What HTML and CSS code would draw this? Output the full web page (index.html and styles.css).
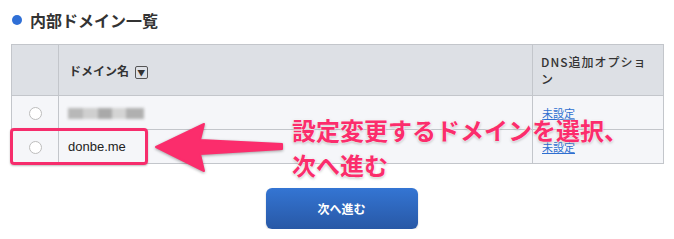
FILE: index.html
```html
<!DOCTYPE html>
<html lang="ja">
<head>
<meta charset="utf-8">
<link rel="stylesheet" href="styles.css">
</head>
<body>
<div class="page">
  <h2 class="title"><span class="dot"></span>内部ドメイン一覧</h2>
  <div class="table-wrap">
    <table class="domains">
      <colgroup><col class="c1"><col class="c2"><col class="c3"></colgroup>
      <thead>
        <tr>
          <th></th>
          <th class="name-h">ドメイン名 <span class="sort">▼</span></th>
          <th class="dns-h">DNS追加オプション</th>
        </tr>
      </thead>
      <tbody>
        <tr>
          <td class="radio-cell"><span class="radio"></span></td>
          <td class="name"><span class="blur"><i></i><i></i><i></i><i></i><i></i></span></td>
          <td class="dns"><a href="#">未設定</a></td>
        </tr>
        <tr>
          <td class="radio-cell"><span class="radio"></span></td>
          <td class="name">donbe.me</td>
          <td class="dns"><a href="#">未設定</a></td>
        </tr>
      </tbody>
    </table>
    <div class="highlight"></div>
    <svg class="arrow" width="140" height="56" viewBox="0 0 140 56">
      <path d="M2 25 L50 2 L46 18 L128 22 L128 27 L46 32 L50 49 Z" fill="#fb2d6c" stroke="#fb2d6c" stroke-width="2" stroke-linejoin="round"/>
    </svg>
    <div class="note">設定変更するドメインを選択、<br>次へ進む</div>
  </div>
  <div class="actions"><button class="next">次へ進む</button></div>
</div>
</body>
</html>
```

FILE: styles.css
```css
* { box-sizing: border-box; }
body {
  margin: 0;
  background: #fff;
  font-family: "Liberation Sans", "Noto Sans CJK JP", sans-serif;
  color: #333;
}
.page { padding: 8px 11px 0 11px; width: 674px; }
.title {
  margin: 0;
  display: flex;
  align-items: center;
  gap: 8px;
  font-size: 16px;
  font-weight: bold;
  color: #333;
  height: 24px;
  font-family: "Noto Sans CJK JP", sans-serif;
}
.dot {
  width: 10px; height: 10px; border-radius: 50%;
  background: #2f6fd6;
  margin-left: 1px;
}
.table-wrap { position: relative; margin-top: 12px; width: 652px; }
.domains {
  border-collapse: collapse;
  width: 652px;
  table-layout: fixed;
  font-size: 12px;
}
.c1 { width: 47px; }
.c2 { width: 474px; }
.c3 { width: 131px; }
.domains th, .domains td {
  border: 1px solid #c3c6cb;
  text-align: left;
  vertical-align: middle;
}
.domains th {
  background: #dde0e5;
  height: 51px;
  font-weight: bold;
  font-family: "Noto Sans CJK JP", sans-serif;
  color: #333;
}
.name-h { padding-left: 10px; }
.sort {
  display: inline-block;
  width: 13px; height: 13px;
  border: 1px solid #555;
  border-radius: 2px;
  font-size: 8px;
  line-height: 11px;
  text-align: center;
  vertical-align: 0px;
  margin-left: 3px;
  color: #333;
}
.domains th.dns-h { padding: 0 8px; font-weight: 500; line-height: 17px; letter-spacing: 1px; }
.domains td { background: #f5f6f9; height: 34px; }
.radio-cell { text-align: center !important; }
.radio {
  display: inline-block;
  width: 13px; height: 13px;
  border: 1px solid #bdbdbd;
  border-radius: 50%;
  background: #fff;
  vertical-align: middle;
}
.name { padding-left: 9px; font-size: 13px; color: #222; }
.blur { display: inline-flex; gap: 0; filter: blur(1.6px); vertical-align: middle; }
.blur i { display: block; width: 15px; height: 11px; background: #b8b8b8; }
.blur i:nth-child(2) { background: #cfcfcf; }
.blur i:nth-child(3) { background: #a9a9a9; width: 14px; }
.blur i:nth-child(4) { background: #d4d4d4; width: 14px; }
.blur i:nth-child(5) { background: #b0b0b0; width: 18px; }
.dns { padding-left: 9px; }
.dns a {
  color: #2f6fd0;
  font-size: 11px;
  font-family: "Noto Sans CJK JP", sans-serif;
  text-decoration: underline;
}
.highlight {
  position: absolute;
  left: -1px; top: 84px;
  width: 138px; height: 37px;
  border: 3px solid #f62d6c;
  border-radius: 4px;
  box-shadow: 0 1px 2px rgba(0,0,0,0.25);
}
.arrow {
  position: absolute;
  left: 143px; top: 78px;
  filter: drop-shadow(0 1px 1.5px rgba(0,0,0,0.35));
}
.note {
  position: absolute;
  left: 281px; top: 68px;
  font-family: "Noto Sans CJK JP", sans-serif;
  font-weight: bold;
  font-size: 24px;
  line-height: 35px;
  color: #fb2d6c;
  white-space: nowrap;
  text-shadow: 0 0 2px #fff, 0 0 2px #fff, 0 1px 3px rgba(0,0,0,0.35);
}
.actions { display: flex; justify-content: center; margin-top: 24px; padding-left: 9px; }
.next {
  width: 152px; height: 41px;
  border: none;
  border-radius: 6px;
  background: linear-gradient(#3475d3, #2858a6);
  color: #fff;
  font-family: "Noto Sans CJK JP", sans-serif;
  font-weight: bold;
  font-size: 12px;
  box-shadow: 0 1px 2px rgba(0,0,0,0.2);
}
```
